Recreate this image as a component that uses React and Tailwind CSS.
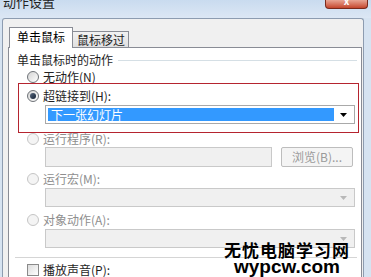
export default function App() {
  const font = { fontFamily: '"SimSun","Noto Sans CJK SC",sans-serif' };

  const Radio = ({ checked, disabled }) => (
    <span
      className={`shrink-0 inline-flex items-center justify-center w-[12px] h-[12px] rounded-full border ${
        disabled ? "border-[#c5c5c5] bg-[#f4f4f4]" : "border-[#6f7378] bg-gradient-to-br from-[#d4d4d4] to-[#ffffff]"
      }`}
    >
      {checked && <span className="w-[6px] h-[6px] rounded-full bg-gradient-to-br from-[#5a6a80] to-[#142235]" />}
    </span>
  );

  const Arrow = ({ disabled }) => (
    <svg width="7" height="4" viewBox="0 0 7 4">
      <path d="M0 0h7L3.5 4z" fill={disabled ? "#b8b8b8" : "#000"} />
    </svg>
  );

  const Row = ({ label, disabled, checked, className }) => (
    <div className={`shrink-0 h-[12px] flex items-center gap-[4px] ${disabled ? "text-[#8e8e8e]" : "text-[#1e1e1e]"} ${className}`}>
      <Radio disabled={disabled} checked={checked} />
      <span className="whitespace-nowrap">{label}</span>
    </div>
  );

  const DisabledSelect = () => (
    <div className="shrink-0 mt-[3px] ml-[27px] mr-[4px] h-[19px] border border-[#c9c9c9] bg-[#f0f0f0] flex items-center justify-end pr-[7px]">
      <Arrow disabled />
    </div>
  );

  return (
    <div className="relative w-[371px] h-[277px] overflow-hidden bg-[#d6e3f1] text-[12px] leading-none" style={font}>
      {/* title bar */}
      <div className="shrink-0 h-[18px] flex justify-between bg-gradient-to-b from-[#c9dbef] to-[#dce7f4]">
        <span className="pl-[3px] -mt-[5px] text-[13px] text-[#222] whitespace-nowrap">动作设置</span>
        <div className="mr-[3px] w-[43px] h-[9px] rounded-b-[4px] border border-t-0 border-[#7a2a1c] bg-gradient-to-b from-[#e8a493] to-[#c4452c] flex justify-center overflow-hidden">
          <span className="text-white text-[10px] font-bold -mt-[4px]">x</span>
        </div>
      </div>

      {/* client area */}
      <div className="ml-[2px] w-[362px] h-[259px] border border-b-0 border-[#8d9cb0] rounded-t-[3px] bg-[#f0f0f0] flex flex-col pl-[5px] pr-[1px] overflow-hidden">
        {/* tabs */}
        <div className="shrink-0 h-[28px] flex items-end pl-[1px]">
          <div className="relative z-10 h-[21px] w-[64px] -mb-px bg-white border border-b-0 border-[#898c95] flex items-center pl-[7px] pb-[2px] whitespace-nowrap">
            单击鼠标
          </div>
          <div className="h-[16px] w-[56px] border border-l-0 border-b-0 border-[#898c95] bg-gradient-to-b from-[#f2f2f2] to-[#e0e0e0] flex items-center pl-[4px] text-[#222] whitespace-nowrap">
            鼠标移过
          </div>
        </div>

        {/* panel */}
        <div className="flex-1 bg-white border border-b-0 border-[#898c95] flex flex-col pt-[5px] pl-[9px] pr-[2px] text-[#1e1e1e] overflow-hidden">
          <div className="shrink-0 flex items-center h-[14px] -ml-[1px]">
            <span className="pr-[5px] whitespace-nowrap">单击鼠标时的动作</span>
            <div className="flex-1 mr-[2px] h-px bg-[#d5dfe5]" />
          </div>

          <Row label="无动作(N)" className="mt-[4px] ml-[9px] text-[#222]" />

          <div className="shrink-0 h-[50px] border border-[#b5242f] flex flex-col">
            <Row label="超链接到(H):" checked className="mt-[6px] ml-[8px]" />
            <div className="shrink-0 mt-[3px] ml-[26px] mr-[3px] h-[19px] border border-[#a9a9a9] bg-white flex items-center p-[2px]">
              <div className="flex-1 h-full bg-[#3399ff] text-white flex items-center pl-[3px] whitespace-nowrap">下一张幻灯片</div>
              <div className="w-[18px] flex justify-center"><Arrow /></div>
            </div>
          </div>

          <Row label="运行程序(R):" disabled className="mt-0 ml-[9px]" />
          <div className="shrink-0 mt-[2px] flex h-[20px] items-center">
            <div className="ml-[27px] w-[227px] h-[20px] border border-[#c9c9c9] bg-[#f0f0f0]" />
            <div className="ml-[9px] w-[72px] h-[20px] border border-[#bdbdbd] rounded-[2px] bg-[#f4f4f4] flex items-center justify-center text-[#9a9a9a] whitespace-nowrap">
              浏览(B)...
            </div>
          </div>

          <Row label="运行宏(M):" disabled className="mt-[6px] ml-[9px]" />
          <DisabledSelect />

          <Row label="对象动作(A):" disabled className="mt-[7px] ml-[9px]" />
          <DisabledSelect />

          <div className="shrink-0 mt-[9px] -ml-[3px] mr-[2px] h-px bg-[#d5d5d5]" />

          <div className="shrink-0 mt-[6px] h-[12px] flex items-center gap-[4px] ml-[9px]">
            <span className="w-[12px] h-[12px] border border-[#8a8a8a] bg-gradient-to-br from-[#dcdcdc] to-white" />
            <span className="whitespace-nowrap">播放声音(P):</span>
          </div>
        </div>
      </div>

      {/* watermark */}
      <div
        className="absolute left-[224px] top-[241px] flex flex-col items-center text-black font-bold leading-none"
        style={{ fontFamily: '"Noto Sans CJK SC",sans-serif' }}
      >
        <span className="text-[17px] tracking-[1px] whitespace-nowrap">无忧电脑学习网</span>
        <span className="text-[19px] -mt-[1px] whitespace-nowrap" style={{ fontFamily: '"Liberation Sans",sans-serif' }}>
          wypcw.com
        </span>
      </div>
    </div>
  );
}
